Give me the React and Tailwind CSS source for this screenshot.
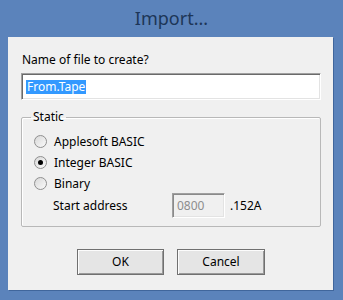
import React from "react";

const font = { fontFamily: '"Noto Sans", "Open Sans", sans-serif' };

function Radio({ checked, label }) {
  return (
    <div className="flex items-center h-[21px]">
      <div className="ml-[12px] w-[13px] h-[13px] rounded-full border border-[#8f8f8f] bg-[linear-gradient(135deg,#d8d8d8,#fafafa)] flex items-center justify-center">
        {checked && <div className="w-[5px] h-[5px] rounded-full bg-black" />}
      </div>
      <span className="ml-[7px] text-[12px] text-black leading-[16px]">{label}</span>
    </div>
  );
}

function Button({ children, w }) {
  return (
    <div
      className={`${w} h-[26px] flex items-center justify-center border border-[#707070] bg-[#e5e5e5] shadow-[inset_1px_1px_0_#fcfcfc,inset_-1px_-1px_0_#9a9a9a] text-[12px] text-black`}
    >
      {children}
    </div>
  );
}

export default function App() {
  return (
    <div className="w-[343px] h-[300px] bg-[#5b83bb] flex flex-col overflow-hidden" style={font}>
      <div className="h-[37px] flex items-center justify-center pb-[1px]">
        <span className="text-[18px] text-[#1d3657] leading-none">Import...</span>
      </div>
      <div className="ml-[8px] w-[325px] h-[253px] bg-[#f0f0f0] shadow-[1px_1px_0_#40669c] pl-[13px] pr-[12px] pt-[15px] flex flex-col">
        <div className="text-[12px] leading-[16px] text-black pl-[1px]">Name of file to create?</div>
        <div className="mt-[5px] h-[27px] bg-white border border-[#a0a0a0] border-b-white border-r-white shadow-[inset_1px_1px_0_#6a6a6a,inset_-1px_-1px_0_#e3e3e3] flex items-center pl-[4px]">
          <span className="bg-[#3399ff] text-white text-[12px] leading-[14px] px-[1px]">From.Tape</span>
        </div>
        <fieldset className="mt-[10px] h-[117px] border border-[#b8b8b8] shadow-[inset_1px_1px_0_#ffffff] rounded-[2px] pt-[7px]">
          <legend className="ml-[9px] px-[2px] text-[12px] leading-[14px] text-black">Static</legend>
          <Radio label="Applesoft BASIC" />
          <Radio checked label="Integer BASIC" />
          <Radio label="Binary" />
          <div className="flex items-center h-[25px] mt-[-1px]">
            <span className="ml-[31px] w-[119px] text-[12px] text-black">Start address</span>
            <div className="w-[53px] h-[25px] border border-[#a0a0a0] border-b-white border-r-white shadow-[inset_1px_1px_0_#8a8a8a,inset_-1px_-1px_0_#e3e3e3] bg-[#f0f0f0] flex items-center pl-[4px] text-[12px] text-[#8d8d8d]">
              0800
            </div>
            <span className="ml-[5px] text-[12px] text-black">.152A</span>
          </div>
        </fieldset>
        <div className="mt-[22px] flex pl-[56px] gap-[13px]">
          <Button w="w-[87px]">OK</Button>
          <Button w="w-[88px]">Cancel</Button>
        </div>
      </div>
    </div>
  );
}
